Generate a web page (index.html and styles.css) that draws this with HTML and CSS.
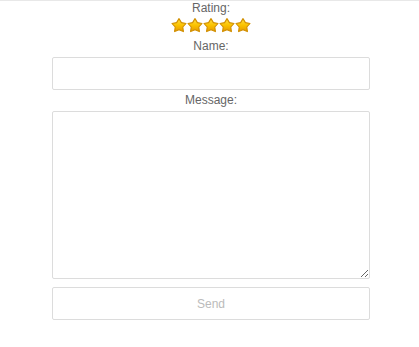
FILE: index.html
```html
<!DOCTYPE html>
<html>
<head>
<meta charset="utf-8">
<link rel="stylesheet" href="styles.css">
</head>
<body>
<form class="feedback">
  <div class="label label-rating">Rating:</div>
  <div class="stars">
    <svg class="star" viewBox="0 0 16 16"><defs><linearGradient id="g" x1="0" y1="0" x2="0" y2="1"><stop offset="0" stop-color="#ffe14a"/><stop offset="0.5" stop-color="#fbc300"/><stop offset="1" stop-color="#e69a00"/></linearGradient></defs><path d="M8 1.6 L10.4 5.6 L15 6.5 L11.8 10 L12.4 14.6 L8 12.7 L3.6 14.6 L4.2 10 L1 6.5 L5.6 5.6 Z" fill="url(#g)" stroke="#d08e00" stroke-width="1.1" stroke-linejoin="round"/></svg>
    <svg class="star" viewBox="0 0 16 16"><path d="M8 1.6 L10.4 5.6 L15 6.5 L11.8 10 L12.4 14.6 L8 12.7 L3.6 14.6 L4.2 10 L1 6.5 L5.6 5.6 Z" fill="url(#g)" stroke="#d08e00" stroke-width="1.1" stroke-linejoin="round"/></svg>
    <svg class="star" viewBox="0 0 16 16"><path d="M8 1.6 L10.4 5.6 L15 6.5 L11.8 10 L12.4 14.6 L8 12.7 L3.6 14.6 L4.2 10 L1 6.5 L5.6 5.6 Z" fill="url(#g)" stroke="#d08e00" stroke-width="1.1" stroke-linejoin="round"/></svg>
    <svg class="star" viewBox="0 0 16 16"><path d="M8 1.6 L10.4 5.6 L15 6.5 L11.8 10 L12.4 14.6 L8 12.7 L3.6 14.6 L4.2 10 L1 6.5 L5.6 5.6 Z" fill="url(#g)" stroke="#d08e00" stroke-width="1.1" stroke-linejoin="round"/></svg>
    <svg class="star" viewBox="0 0 16 16"><path d="M8 1.6 L10.4 5.6 L15 6.5 L11.8 10 L12.4 14.6 L8 12.7 L3.6 14.6 L4.2 10 L1 6.5 L5.6 5.6 Z" fill="url(#g)" stroke="#d08e00" stroke-width="1.1" stroke-linejoin="round"/></svg>
  </div>
  <label class="label label-name" for="name">Name:</label>
  <input class="field" id="name" type="text">
  <label class="label label-message" for="message">Message:</label>
  <textarea class="field area" id="message"></textarea>
  <button class="send" type="button">Send</button>
</form>
</body>
</html>
```
FILE: styles.css
```css
html, body {
  margin: 0;
  padding: 0;
  background: #fff;
}
body {
  border-top: 1px solid #e8e8e8;
  font-family: "Liberation Sans", Arial, sans-serif;
  font-size: 12px;
  color: #666;
}
.feedback {
  display: flex;
  flex-direction: column;
  margin: 0 49px 0 52px;
}
.label {
  display: block;
  text-align: center;
  line-height: 14px;
  height: 14px;
}
.stars {
  display: flex;
  justify-content: center;
  margin: 2px 0 6px 0;
  height: 16px;
}
.star {
  width: 16px;
  height: 16px;
  display: block;
}
.label-name {
  margin-bottom: 4px;
}
.field {
  box-sizing: border-box;
  width: 100%;
  height: 33px;
  border: 1px solid #dcdcdc;
  border-radius: 2px;
  margin: 0;
  padding: 4px 6px;
  font-family: inherit;
  font-size: 12px;
  background: #fff;
  outline: none;
}
.label-message {
  margin-top: 3px;
  margin-bottom: 4px;
}
.area {
  height: 168px;
  resize: both;
  display: block;
}
.send {
  box-sizing: border-box;
  margin-top: 8px;
  width: 100%;
  height: 33px;
  border: 1px solid #dcdcdc;
  border-radius: 2px;
  background: #fff;
  color: #bbb;
  font-family: inherit;
  font-size: 12px;
  padding: 0;
}
```
